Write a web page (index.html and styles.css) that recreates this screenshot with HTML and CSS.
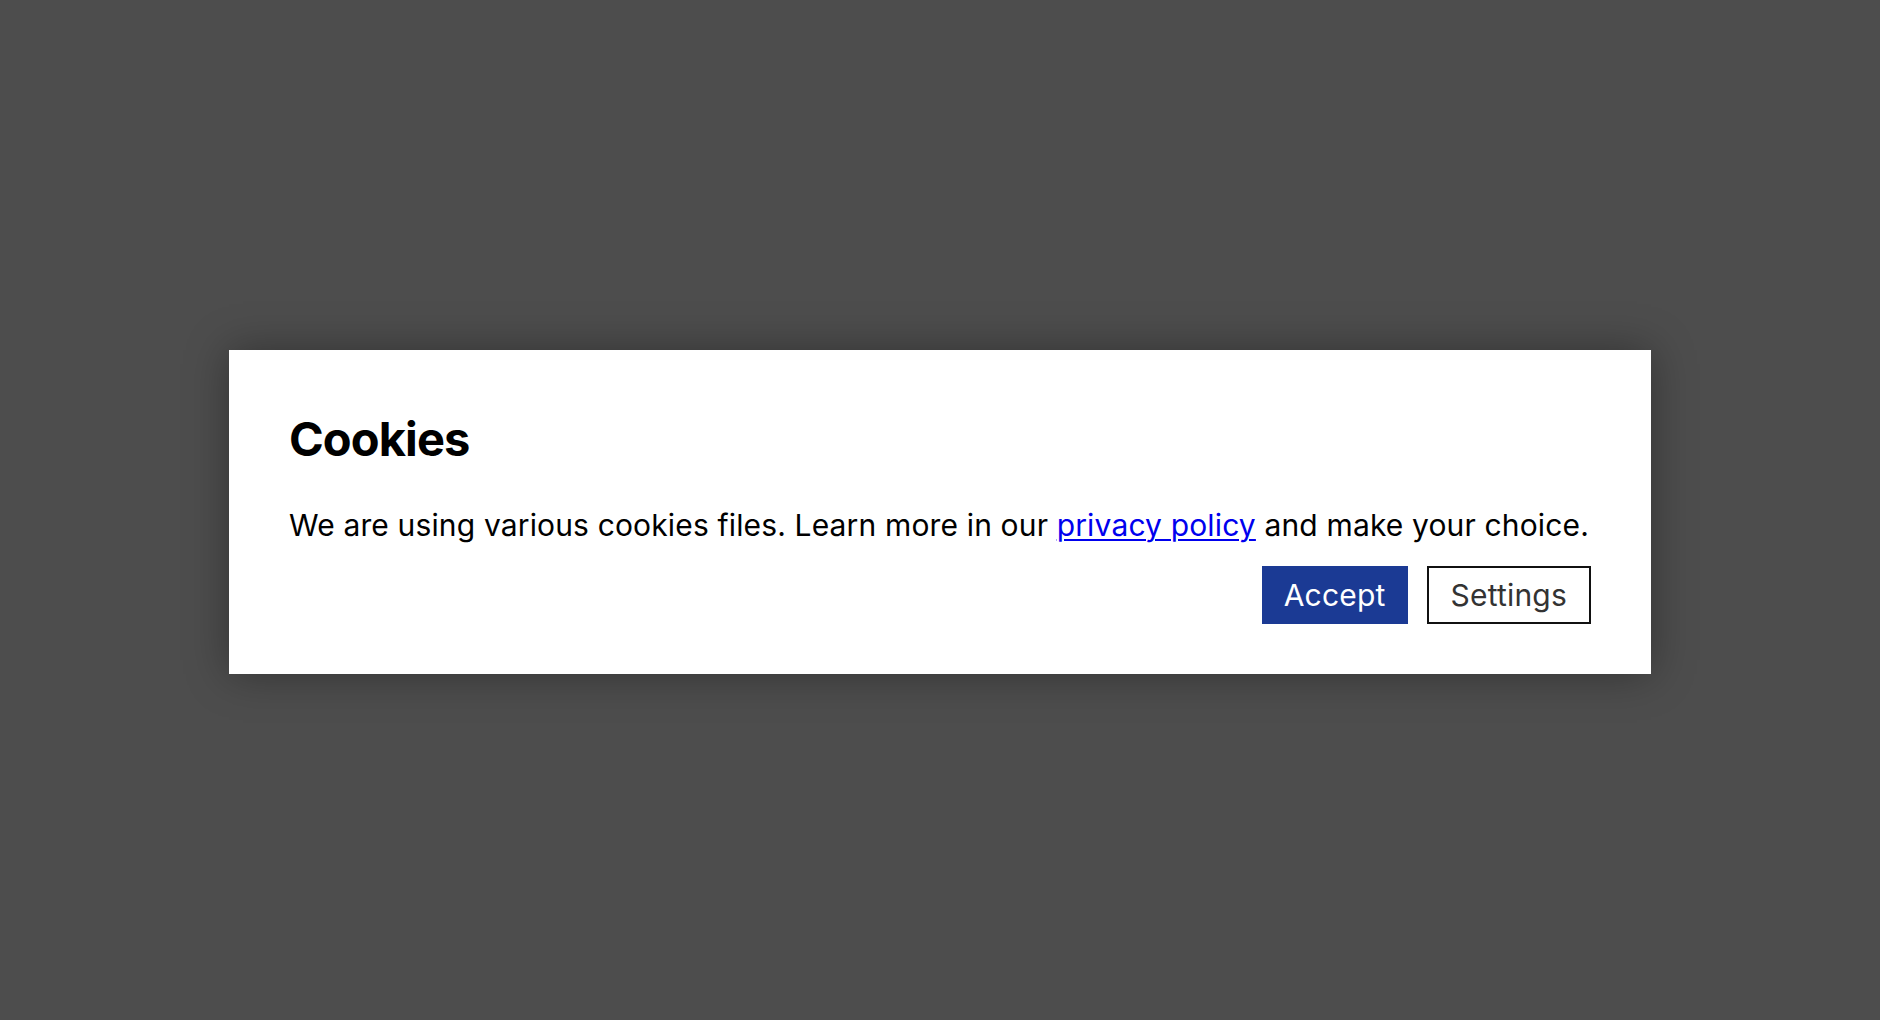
FILE: index.html
```html
<!DOCTYPE html>
<html lang="en">
<head>
<meta charset="utf-8">
<title>Cookies</title>
<link rel="stylesheet" href="styles.css">
</head>
<body>
<div class="overlay">
  <div class="dialog" role="dialog" aria-labelledby="cookie-title">
    <h1 class="title" id="cookie-title">Cookies</h1>
    <p class="text">We are using various cookies files. Learn more in our <a href="#" class="link">privacy policy</a> and make your choice.</p>
    <div class="actions">
      <button class="btn btn-primary" type="button">Accept</button>
      <button class="btn btn-outline" type="button">Settings</button>
    </div>
  </div>
</div>
</body>
</html>
```
FILE: styles.css
```css
html, body {
  margin: 0;
  padding: 0;
  height: 100%;
}
body {
  background: #4d4d4d;
  font-family: Inter, "Noto Sans", "Liberation Sans", sans-serif;
  color: #000;
}
.overlay {
  height: 100%;
  box-sizing: border-box;
  padding-top: 4px;
  display: flex;
  align-items: center;
  justify-content: center;
}
.dialog {
  width: 1422px;
  box-sizing: border-box;
  background: #fff;
  padding: 60px 60px 50px 60px;
  box-shadow: 0 0 40px rgba(0, 0, 0, 0.35);
}
.title {
  margin: 0 0 35px 0;
  font-size: 47px;
  line-height: 58px;
  font-weight: 700;
  letter-spacing: -0.9px;
}
.text {
  margin: 0;
  font-size: 30px;
  line-height: 45px;
  letter-spacing: 0.15px;
}
.link {
  color: #0000ee;
  text-decoration: underline;
  text-underline-offset: 3px;
  text-decoration-thickness: 2px;
}
.actions {
  display: flex;
  justify-content: flex-end;
  gap: 19px;
  margin-top: 18px;
}
.btn {
  font-family: inherit;
  font-size: 30px;
  line-height: 36px;
  padding: 9px 20px;
  border: 2px solid transparent;
  border-radius: 0;
  cursor: pointer;
  letter-spacing: 0.2px;
}
.btn-primary {
  background: #1b3a94;
  color: #fff;
  border-color: #1b3a94;
}
.btn-outline {
  background: #fff;
  color: #333;
  border-color: #111;
  padding-left: 22px;
  padding-right: 22px;
}
```
